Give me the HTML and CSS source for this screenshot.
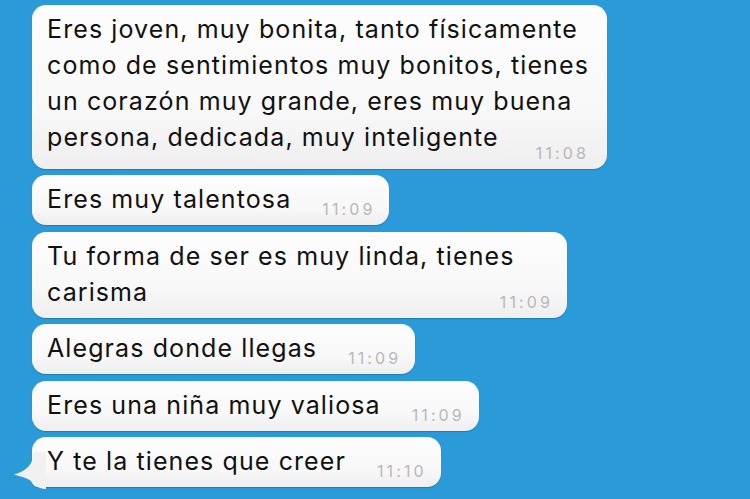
FILE: index.html
```html
<!DOCTYPE html>
<html lang="es">
<head>
<meta charset="utf-8">
<title>Chat</title>
<link rel="stylesheet" href="styles.css">
</head>
<body>
<main class="chat">
  <div class="bubble bubble--first">
    <span class="text">Eres joven, muy bonita, tanto físicamente<br>como de sentimientos muy bonitos, tienes<br>un corazón muy grande, eres muy buena<br>persona, dedicada, muy inteligente</span><span class="time time--low">11:08</span>
  </div>
  <div class="bubble">
    <span class="text">Eres muy talentosa</span><span class="time">11:09</span>
  </div>
  <div class="bubble bubble--wide">
    <span class="text">Tu forma de ser es muy linda, tienes<br>carisma</span><span class="time">11:09</span>
  </div>
  <div class="bubble">
    <span class="text">Alegras donde llegas</span><span class="time">11:09</span>
  </div>
  <div class="bubble">
    <span class="text">Eres una niña muy valiosa</span><span class="time">11:09</span>
  </div>
  <div class="bubble bubble--tail">
    <span class="text">Y te la tienes que creer</span><span class="time">11:10</span>
    <svg class="tail" width="36" height="40" viewBox="0 0 36 40" aria-hidden="true">
      <path d="M22 0 L21 2 C21 12 15 19 2 22.5 C10 25 15 26 19 29 C21 33 25 36.5 34 37 L34 0 Z" fill="#f1f1f1"/>
    </svg>
  </div>
</main>
</body>
</html>
```

FILE: styles.css
```css
html, body {
  margin: 0;
  padding: 0;
}

body {
  background: #2a9bd8;
  width: 750px;
  height: 499px;
  overflow: hidden;
  font-family: Inter, "Noto Sans", sans-serif;
}

.chat {
  display: flex;
  flex-direction: column;
  align-items: flex-start;
  gap: 6.4px;
  padding: 5px 0 0 32px;
}

.bubble {
  position: relative;
  box-sizing: border-box;
  padding: 6px 14px 8px 15px;
  border-radius: 14px;
  background: linear-gradient(#fdfdfd, #f8f8f8 65%, #eeeeee);
  box-shadow: 0 1px 1px rgba(0, 30, 60, 0.25);
  color: #111111;
  font-size: 25px;
  line-height: 36px;
  letter-spacing: 1.1px;
  white-space: nowrap;
}

.bubble--first {
  padding-right: 18px;
}

.bubble--wide {
  min-width: 535px;
}

.time {
  float: right;
  margin: 20px 0 0 31px;
  font-size: 16px;
  line-height: 16px;
  color: #b8b8b8;
  letter-spacing: 3.1px;
}

.time--low {
  margin-top: 26px;
}

.bubble--tail {
  border-bottom-left-radius: 6px;
}

.tail {
  position: absolute;
  left: -20px;
  top: 15px;
  display: block;
}
```
